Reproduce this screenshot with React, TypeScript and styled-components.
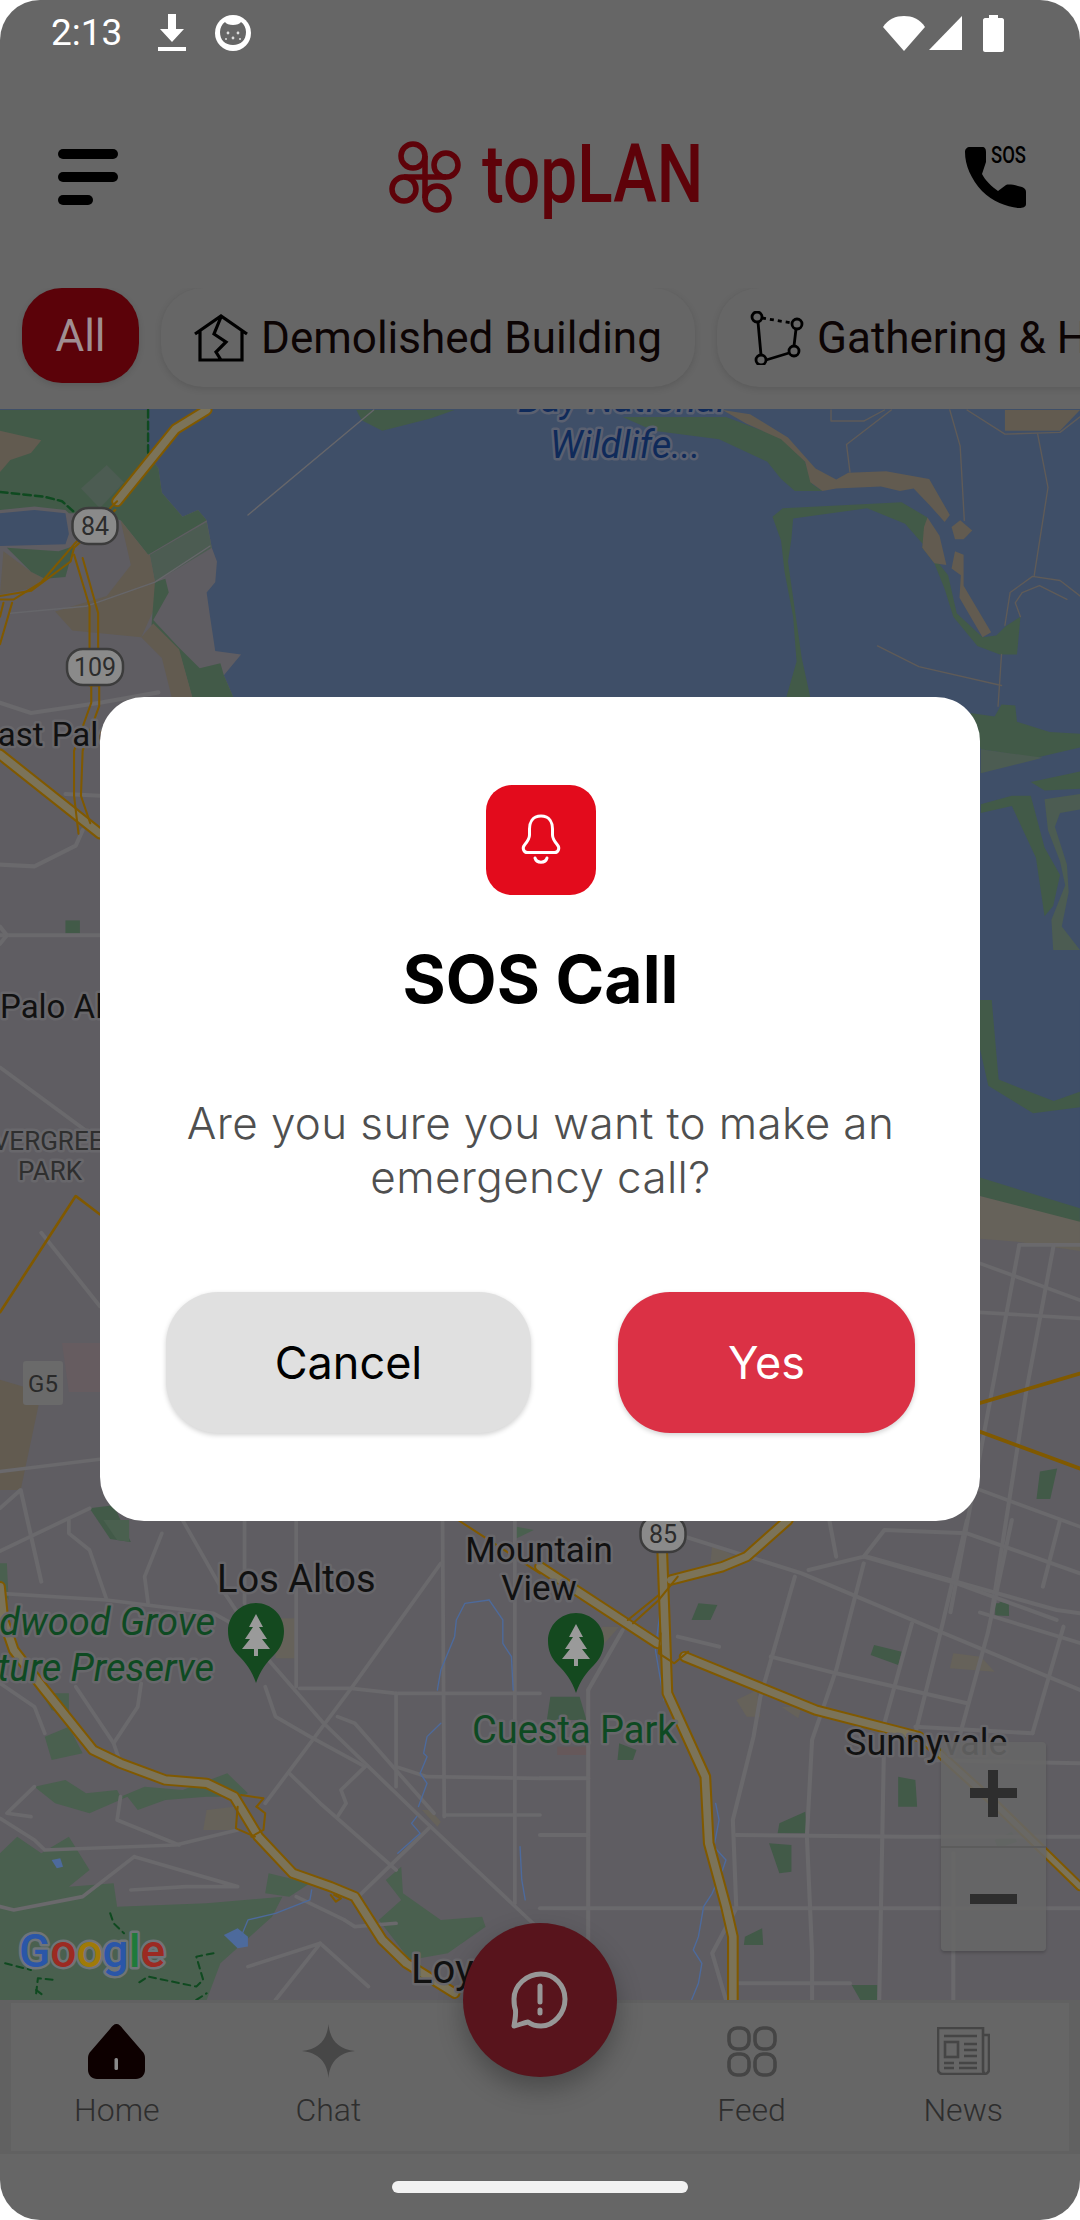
import React from "react";
import styled, { createGlobalStyle } from "styled-components";

const Global = createGlobalStyle`
  html, body { margin: 0; padding: 0; background: #fff; }
  * { box-sizing: border-box; }
`;

const Screen = styled.div`
  position: relative;
  width: 1080px;
  height: 2220px;
  border-radius: 40px;
  overflow: hidden;
  background: #666;
  display: flex;
  flex-direction: column;
  font-family: Roboto, "Liberation Sans", sans-serif;
`;

const StatusBar = styled.div`
  height: 66px;
  flex: none;
  display: flex;
  align-items: center;
  padding: 0 76px 0 51px;
  color: #fff;
`;
const Time = styled.span`
  font-size: 37px;
  line-height: 66px;
  width: 107px;
  flex: none;
`;
const StatusRight = styled.div`
  margin-left: auto;
  display: flex;
  align-items: center;
`;
const StatusIcon = styled.svg<{ $gap?: number }>`
  display: block;
  flex: none;
  margin-right: ${(p) => p.$gap ?? 0}px;
`;

const Header = styled.header`
  height: 222px;
  flex: none;
  display: flex;
  align-items: center;
  justify-content: space-between;
  padding: 0 54px 0 58px;
`;
const MenuButton = styled.div`
  display: flex;
  flex-direction: column;
  gap: 13px;
  width: 60px;
`;
const MenuBar = styled.span<{ $w: number }>`
  display: block;
  height: 10px;
  width: ${(p) => p.$w}px;
  border-radius: 5px;
  background: #000;
`;
const Logo = styled.div`
  display: flex;
  align-items: center;
  gap: 21px;
  margin-left: 4px;
`;
const LogoText = styled.span`
  display: block;
  width: 216px;
  font-size: 82px;
  line-height: 84px;
  font-weight: 500;
  color: #5e0209;
  white-space: nowrap;
  transform: scaleX(0.8);
  transform-origin: left center;
  margin-top: -6px;
`;
const PhoneBox = styled.div`
  position: relative;
  width: 61px;
  height: 61px;
`;
const SosBadge = styled.span`
  position: absolute;
  left: 26px;
  top: -3px;
  font-size: 23px;
  line-height: 24px;
  font-weight: 500;
  color: #000;
  transform: scaleX(0.8);
  transform-origin: left center;
`;

const ChipRow = styled.div`
  height: 121px;
  flex: none;
  display: flex;
  align-items: flex-start;
  gap: 22px;
  padding-left: 22px;
  overflow: hidden;
`;
const ActiveChip = styled.div`
  flex: none;
  width: 117px;
  height: 95px;
  border-radius: 40px;
  background: #5b0209;
  box-shadow: 0 2px 6px rgba(0, 0, 0, 0.12);
  color: #a08e92;
  font-size: 44px;
  display: flex;
  align-items: center;
  justify-content: center;
`;
const Chip = styled.div<{ $w: number }>`
  flex: none;
  width: ${(p) => p.$w}px;
  height: 99px;
  border-radius: 42px;
  background: #666;
  box-shadow: 0 2px 7px rgba(0, 0, 0, 0.12);
  color: #0c0404;
  font-size: 44px;
  display: flex;
  align-items: center;
  gap: 13px;
  padding-left: 33px;
  white-space: nowrap;
`;

const MapArea = styled.div`
  position: relative;
  flex: none;
  height: 1591px;
  overflow: hidden;
  background: #5f5d62;
`;
const MapSvg = styled.svg`
  display: block;
`;
const Label = styled.text<{ $s: number; $c?: string; $i?: boolean; $w?: number; $halo?: string }>`
  font-family: Roboto, "Liberation Sans", sans-serif;
  font-size: ${(p) => p.$s}px;
  font-style: ${(p) => (p.$i ? "italic" : "normal")};
  font-weight: ${(p) => p.$w ?? 400};
  fill: ${(p) => p.$c ?? "#111"};
  stroke: ${(p) => p.$halo ?? "#68676b"};
  stroke-width: 5px;
  paint-order: stroke;
  stroke-linejoin: round;
`;

const ZoomBox = styled.div`
  position: absolute;
  left: 941px;
  top: 1333px;
  width: 105px;
  height: 209px;
  border-radius: 4px;
  background: rgba(102, 102, 102, 0.88);
  box-shadow: 0 2px 3px rgba(0, 0, 0, 0.18);
  display: flex;
  flex-direction: column;
`;
const ZoomCell = styled.div`
  flex: 1;
  display: flex;
  align-items: center;
  justify-content: center;
  & + & {
    border-top: 2px solid #5c5c5c;
  }
`;

const NavBar = styled.nav`
  position: relative;
  height: 154px;
  flex: none;
  padding: 3px 11px;
  background: #616161;
`;
const NavInner = styled.div`
  height: 100%;
  background: #666;
  display: grid;
  grid-template-columns: repeat(5, 1fr);
`;
const NavItem = styled.div`
  position: relative;
  display: flex;
  flex-direction: column;
  align-items: center;
  padding-top: 20px;
`;
const NavIconBox = styled.div`
  height: 56px;
  display: flex;
  align-items: center;
  justify-content: center;
`;
const NavLabel = styled.span`
  margin-top: 12px;
  font-size: 32px;
  line-height: 38px;
  font-weight: 300;
  color: #2e2e2e;
`;
const Fab = styled.div`
  position: absolute;
  left: 50%;
  top: -80px;
  width: 154px;
  height: 154px;
  margin-left: -77px;
  border-radius: 50%;
  background: #58141c;
  box-shadow: 0 12px 26px rgba(0, 0, 0, 0.28);
  display: flex;
  align-items: center;
  justify-content: center;
`;

const Footer = styled.div`
  flex: 1;
  display: flex;
  justify-content: center;
  padding-top: 27px;
`;
const HomePill = styled.div`
  width: 296px;
  height: 12px;
  border-radius: 6px;
  background: #f2f2f2;
`;

const DialogLayer = styled.div`
  position: absolute;
  inset: 0;
  display: flex;
  align-items: center;
  justify-content: center;
`;
const Dialog = styled.div`
  width: 880px;
  height: 824px;
  margin-top: -2px;
  border-radius: 44px;
  background: #fff;
  padding: 88px 65px 0 66px;
  display: flex;
  flex-direction: column;
  align-items: center;
  font-family: Inter, "Liberation Sans", sans-serif;
`;
const BellTile = styled.div`
  width: 110px;
  height: 110px;
  border-radius: 26px;
  background: #e30b1c;
  display: flex;
  align-items: center;
  justify-content: center;
  flex: none;
`;
const Title = styled.h2`
  margin: 45px 0 0;
  font-size: 66px;
  line-height: 78px;
  font-weight: 700;
  color: #000;
`;
const Message = styled.p`
  margin: 78px 0 0;
  width: 740px;
  font-size: 44px;
  line-height: 54px;
  font-weight: 300;
  letter-spacing: 0.37px;
  color: #4f4f4f;
  text-align: center;
`;
const Actions = styled.div`
  margin-top: 88px;
  width: 100%;
  display: flex;
  justify-content: space-between;
`;
const ActionButton = styled.div<{ $w: number; $bg: string; $c: string }>`
  width: ${(p) => p.$w}px;
  height: 141px;
  border-radius: 52px;
  background: ${(p) => p.$bg};
  color: ${(p) => p.$c};
  box-shadow: 0 2px 5px rgba(0, 0, 0, 0.18);
  font-size: 45px;
  font-weight: 400;
  display: flex;
  align-items: center;
  justify-content: center;
`;

/* ---------- map data: each group is traced in its own crop's coordinates ---------- */
const C = {
  land: "#5f5d62",
  water: "#3f4f68",
  green: "#425a48",
  mgreen: "#4a604f",
  lgreen: "#4c5c52",
  tan: "#625b50",
  sand: "#66625a",
  road: "#6a696c",
  edge: "#805900",
  core: "#7b7359",
  blue: "#4d6a9c",
  trail: "#0f4a20",
};

type Poly = [string, string];

const Z9_POLYS: Poly[] = [
  ["0,0 430,0 430,130 460,170 470,240 530,310 575,290 600,320 615,400 630,440 625,500 600,530 610,600 625,700 700,710 650,770 680,840 1568,840 1568,1568 0,1568", C.land],
  ["0,0 430,0 430,130 460,170 470,240 530,310 575,290 600,320 430,420 350,320 280,300 200,300 190,290 100,280 0,290", C.green],
  ["0,60 120,88 90,125 30,145 0,180", C.tan],
  ["310,160 360,210 290,285 235,228", C.lgreen],
  ["435,420 600,325 615,400 450,500", C.lgreen],
  ["350,320 430,420 435,420 460,550 410,660 210,640 160,585 310,540 380,450", C.tan],
  ["10,410 90,470 130,490 80,520 0,535", C.tan],
  ["20,400 170,410 215,395 190,485 130,490 90,470", C.green],
  ["450,500 480,490 490,530 445,610 520,690 580,750 640,735 650,770 680,840 560,840 520,700 440,625", C.green],
  ["410,660 445,620 520,695 560,840 500,840 470,720", C.tan],
  ["0,300 100,290 190,300 200,360 190,390 0,395", C.water],
  ["1035,0 1320,0 1250,25 1110,60 1050,30", C.green],
  ["190,1482 232,1482 232,1520 190,1520", C.green],
];
const Z9_ROADS: string[] = [
  "0,850 90,880 290,850 460,820",
  "0,1320 100,1325 220,1265 240,1220",
  "190,1115 290,1120",
  "0,1525 290,1525",
  "0,1500 20,1525 0,1550",
];
const Z9_THIN: string[] = ["720,305 1085,0", "30,590 250,570 450,500 610,395"];
const Z9_HWY: string[] = ["600,0 510,55 340,265", "0,1000 290,1230"];
const Z9_GOLD: string[] = [
  "340,265 215,390 120,500 40,550 0,550",
  "335,290 215,400 205,440 90,525 0,540",
  "215,420 260,570 260,800 285,800 285,590 240,430",
  "35,560 0,680",
  "10,560 0,600",
  "265,800 265,850 215,990 215,1120 228,1230",
  "288,800 288,860 240,990 235,1120 262,1200",
];

const Z10_POLYS: Poly[] = [
  ["240,20 540,20 700,80 770,150 790,215 820,235 740,235 700,200 660,150 520,85 330,60", C.green],
  ["530,0 610,12 720,80 800,170 860,202 895,182 1005,178 1130,200 1190,305 1175,325 1130,275 1085,228 1045,235 990,222 860,228 820,235 785,210 770,150 700,85 600,40", C.tan],
  ["675,310 705,285 1050,268 1125,312 1110,400 1145,445 1175,520 1200,600 1270,685 1335,710 1385,710 1395,600 1352,628 1325,655 1285,660 1210,590 1185,480 1130,410 1060,330 950,285 735,315 730,375 720,440 760,720 785,835 715,835 745,730 735,600 710,470 700,380", C.green],
  ["1125,312 1160,365 1180,450 1145,445 1110,400 1115,340", C.tan],
  ["1220,320 1255,350 1230,375 1205,375 1195,340", C.tan],
  ["1205,410 1230,420 1230,510 1310,645 1285,660 1218,545 1222,480 1195,460", C.tan],
  ["1350,0 1568,0 1510,60 1350,60", C.tan],
  ["1250,880 1320,890 1340,855 1380,858 1385,905 1480,935 1568,940 1568,980 1440,1010 1280,985", C.green],
  ["1280,985 1460,1010 1280,1055", C.lgreen],
  ["1425,1080 1568,1050 1568,1100 1465,1105", C.green],
  ["1280,1145 1370,1120 1425,1120 1465,1270 1510,1350 1490,1440 1465,1470 1440,1300 1370,1150 1280,1170", C.green],
  ["1465,1130 1568,1115 1568,1160 1510,1170 1495,1210 1530,1320 1535,1400 1515,1500 1568,1568 1490,1568 1485,1480 1525,1380 1510,1310 1475,1220", C.lgreen],
];
const Z10_LINES: string[] = [
  "890,100 1020,0",
  "890,100 900,180",
  "845,0 845,32 940,32 1000,0",
  "1190,0 1220,105 1232,320",
  "1445,70 1475,225 1435,480",
  "1240,0 1350,70 1510,65 1568,20",
  "1350,625 1365,530 1430,483 1510,495 1568,540",
  "1395,600 1380,560 1400,530 1450,510 1530,550",
  "980,685 1100,745 1340,800",
  "1340,710 1330,860",
];

const Z5_POLYS: Poly[] = [
  ["1423,0 1568,0 1568,360 1500,340 1423,310", C.water],
  ["1423,320 1568,360 1568,410 1480,395 1423,390", C.sand],
  ["130,830 165,825 190,885 160,880", C.green],
  ["1423,0 1440,0 1450,130 1530,165 1568,150 1568,175 1500,185 1435,140 1423,80", C.green],
  ["1423,290 1568,340 1568,362 1423,320", C.green],
  ["1510,770 1535,765 1525,815 1505,815", C.green],
  ["1445,985 1465,985 1465,1005 1445,1005", C.green],
  ["0,620 60,640 30,800 0,800", C.tan],
  ["90,560 150,560 150,640 100,640", "#665c60"],
];
const Z5_ROADS: string[] = [
  "0,110 145,230",
  "0,770 145,750",
  "0,830 30,800 60,950",
  "130,830 0,900",
  "1480,400 1568,400",
  "1480,400 1440,640 1380,1000",
  "1423,430 1568,490",
  "1423,800 1568,860",
  "1530,400 1490,640 1440,1000",
  "1568,520 1423,510",
  "1423,1000 1568,1050",
  "145,500 60,380",
];
const Z5_HWY: string[] = ["0,510 110,320 145,350"];
const Z5_GOLD: string[] = ["1423,658 1568,610", "1423,705 1568,765"];

const Z11_POLYS: Poly[] = [
  ["100,800 190,780 250,820 340,810 350,830 420,800 530,810 660,760 720,820 700,830 600,830 480,840 400,870 370,830 260,880 160,850", C.mgreen],
  ["0,1000 50,950 120,1000 200,950 260,1050 200,1100 330,1090 340,1160 600,1150 820,1130 790,1190 640,1330 600,1440 0,1440", C.mgreen],
  ["130,650 200,620 240,700 150,720", C.mgreen],
  ["120,520 200,520 200,590 150,570", C.mgreen],
  ["300,0 375,0 375,65 340,60", C.mgreen],
  ["780,1060 900,1090 840,1130 770,1120", C.mgreen],
  ["1120,1080 1165,1040 1170,1120 1280,1200 1400,1190 1410,1220 1300,1300 1190,1320 1100,1200 1165,1140", C.mgreen],
  ["1500,20 1550,30 1490,60", C.mgreen],
  ["0,130 20,130 25,240 0,200", C.mgreen],
  ["600,870 680,860 690,930 590,930", C.sand],
  ["800,295 860,295 860,415 800,415", "#66625a"],
  ["650,1245 690,1225 720,1250 720,1280 690,1285", "#4d6a9c"],
  ["150,1020 175,1015 183,1040 165,1045", "#4d6a9c"],
  ["1225,870 1250,870 1280,905 1270,920", C.sand],
];
const Z11_ROADS: string[] = [
  "530,0 640,200 780,420 940,610 1230,900 1568,1230",
  "860,0 860,500",
  "710,0 710,250",
  "1285,0 1290,890",
  "870,505 1020,505 1150,520 1568,520",
  "1280,130 1020,505 770,850",
  "1150,520 1150,800",
  "1150,740 1240,770 1568,775",
  "1290,885 1568,885",
  "770,500 800,590 900,650 1060,740",
  "980,590 1030,610 1260,880",
  "840,760 930,850 1150,1050",
  "1060,740 990,810 1005,850 980,890",
  "1250,920 1040,1130",
  "1495,0 1495,1150",
  "200,0 200,40 260,90 310,240 620,280 690,320",
  "430,250 420,170 470,40",
  "310,240 0,220",
  "220,500 330,670 350,730",
  "410,490 400,560 330,670",
  "0,490 100,560 130,640",
  "350,830 340,900 520,975",
  "0,895 100,960 130,990 510,975 690,930",
  "0,1160 40,1170 240,1130 390,1010",
  "390,1010 690,1100 540,1100 380,1110",
  "100,800 20,880 90,890",
  "930,1270 1070,1400",
  "720,1340 930,1270 800,1440",
  "860,1130 1000,1200",
  "1000,1200 1030,1220 1150,1210",
];
const Z11_STREAMS: string[] = [
  "905,1110 900,1140 800,1180 720,1200 700,1250",
  "1420,240 1350,250 1325,300 1320,350 1280,450 1270,510",
  "1420,240 1460,300 1460,370 1485,410 1490,510",
  "1280,610 1240,650 1230,700 1240,710 1220,760 1240,790 1215,860",
  "1210,890 1195,910 1220,940 1155,1000",
  "1510,980 1515,1080 1525,1140",
];
const Z11_TRAILS: string[] = [
  "320,1180 330,1210 360,1240",
  "620,1300 570,1310 590,1380 570,1400 430,1370 400,1390",
  "15,1330 90,1350",
  "105,1420 110,1375 160,1380",
  "105,1410 130,1430",
  "570,1440 600,1420",
];
const Z11_HWY = "0,200 10,300 40,390 130,510 270,690 350,730 480,780 600,790 680,830 750,950 850,1060 960,1100 1030,1130 1110,1260 1180,1330 1320,1420";
const Z11_GOLD: string[] = [
  "700,825 765,835 745,860",
  "690,860 685,925 740,950",
  "745,860 770,880 765,930 730,950",
  "1330,0 1568,160",
  "960,1125 975,1145 990,1135 970,1125",
];

const Z12_POLYS: Poly[] = [
  ["970,375 1050,395 1040,435 960,405", C.green],
  ["460,250 515,255 495,300 440,300", C.green],
  ["1335,245 1355,250 1362,288 1325,285", C.green],
  ["30,530 115,530 135,600 20,600", C.green],
  ["1040,770 1090,780 1095,860 1040,860", C.green],
  ["695,910 770,875 775,940 690,940", C.green],
  ["665,970 730,975 730,1055 695,1060", C.green],
  ["595,1250 645,1225 648,1275 592,1275", C.green],
  ["905,1395 980,1395 980,1440 930,1440", C.green],
  ["230,670 280,690 270,720 225,720", C.green],
  ["1200,400 1280,410 1320,455 1190,445", C.sand],
  ["570,540 630,510 640,590 600,590", C.sand],
  ["700,560 760,560 750,595", C.sand],
  ["500,75 570,110 530,135 495,130", C.sand],
  ["180,320 230,320 170,390", C.sand],
  ["50,680 135,680 135,705 50,705", "#66585a"],
  ["1320,960 1370,935 1385,965 1330,985", C.green],
];
const Z12_ROADS: string[] = [
  "140,510 240,330",
  "140,510 140,1440",
  "0,1165 1568,1165",
  "420,50 760,160 1150,330 1568,510",
  "740,170 640,530 620,650 560,900 570,1165 500,1300 540,1440",
  "940,130 860,450 790,660 775,950 790,1300 790,1440",
  "1240,0 1160,350 1090,640",
  "1080,310 1000,610 985,1440",
  "1370,0 1300,340 1210,680",
  "670,410 860,460 1240,550",
  "950,110 1500,270 1568,280",
  "780,150 940,110 1210,190 1500,300",
  "570,945 1060,950 1568,950",
  "0,775 140,775",
  "0,945 140,945",
  "575,1390 900,1390",
  "1090,620 1430,640",
  "1430,640 1520,320",
  "1510,0 1460,200",
  "1200,1000 1200,1440",
  "1120,720 1568,730",
  "400,350 520,380",
  "840,0 860,110",
  "940,110 1000,30 1240,40 1568,160",
];
const Z12_STREAMS: string[] = [
  "350,260 335,390 360,540",
  "510,850 520,900 505,980 540,1020 530,1050 500,1120 475,1160 460,1250 445,1290 470,1330 460,1390 440,1440",
];
const Z12_HWY: string[] = [
  "355,95 370,520 480,770 490,970 540,1160 560,1250 560,1440",
  "380,180 530,140 600,110 720,0",
  "0,140 340,370",
  "420,410 800,570 1100,650",
];
const Z12_GOLD: string[] = ["255,300 345,225", "270,310 345,240 400,170", "350,340 345,400 390,430 430,395"];
const Z12_HWY2: string[] = ["1100,650 1160,700 1320,850 1568,1100"];

const Polys: React.FC<{ items: Poly[] }> = ({ items }) => (
  <>
    {items.map(([points, fill], i) => (
      <polygon key={i} points={points} fill={fill} />
    ))}
  </>
);
const Lines: React.FC<{ items: string[]; color: string; width: number; dash?: string }> = ({ items, color, width, dash }) => (
  <>
    {items.map((points, i) => (
      <polyline
        key={i}
        points={points}
        fill="none"
        stroke={color}
        strokeWidth={width}
        strokeLinejoin="round"
        strokeLinecap="round"
        strokeDasharray={dash}
      />
    ))}
  </>
);
const Highways: React.FC<{ items: string[]; w?: number }> = ({ items, w = 34 }) => (
  <>
    <Lines items={items} color={C.edge} width={w} />
    <Lines items={items} color={C.core} width={w - 12} />
  </>
);

const Shield: React.FC<{ cx: number; cy: number; w: number; text: string }> = ({ cx, cy, w, text }) => (
  <g>
    <rect x={cx - w / 2} y={cy - 18} width={w} height={36} rx={16} fill="#8a8a8a" stroke="#3c3c3c" strokeWidth={2.5} />
    <Label x={cx} y={cy + 9} textAnchor="middle" $s={25} $c="#2c2c2c" $halo="none">
      {text}
    </Label>
  </g>
);

const Pin: React.FC<{ x: number; y: number }> = ({ x, y }) => (
  <g transform={`translate(${x} ${y})`}>
    <path d="M0 80C-4 68-10 60-18 52-25 45-28 37-28 28-28 12-15 0 0 0S28 12 28 28C28 37 25 45 18 52 10 60 4 68 0 80Z" fill="#14491f" />
    <path d="M0 11 7 24H3L11 36H6L14 46H2V53H-2V46H-14L-6 36H-11L-3 24H-7Z" fill="#9a9a9a" />
  </g>
);

const CityMap: React.FC = () => (
  <MapSvg width={1080} height={1591} viewBox="0 409 1080 1591">
    <rect x={0} y={409} width={1080} height={1591} fill={C.land} />
    <rect x={0} y={409} width={1080} height={541} fill={C.water} />
    <polygon points="980,950 1080,950 1080,1220 1034,1190 980,1190" fill={C.water} />
    <g transform="translate(0 410) scale(.3444)">
      <Polys items={Z9_POLYS} />
      <Lines items={Z9_ROADS} color={C.road} width={12} />
      <Lines items={Z9_THIN} color="#66666a" width={4} />
      <Lines items={["430,0 430,130", "0,238 130,252 180,265 225,305"]} color={C.trail} width={7} dash="22 12" />
    </g>
    <g transform="translate(540 410) scale(.3444)">
      <Polys items={Z10_POLYS} />
      <Lines items={Z10_LINES} color="#5f5b58" width={4} />
    </g>
    <g transform="translate(0 1000) scale(.6887 .6124)">
      <Polys items={Z5_POLYS} />
      <Lines items={Z5_ROADS} color={C.road} width={6} />
    </g>
    <g transform="translate(0 1520) scale(.3444 .3333)">
      <Polys items={Z11_POLYS} />
      <Lines items={Z11_ROADS} color={C.road} width={11} />
      <Lines items={Z11_STREAMS} color={C.blue} width={4} />
      <Lines items={Z11_TRAILS} color={C.trail} width={6} dash="20 14" />
    </g>
    <g transform="translate(540 1520) scale(.3444 .3333)">
      <Polys items={Z12_POLYS} />
      <Lines items={Z12_ROADS} color={C.road} width={12} />
      <Lines items={Z12_STREAMS} color={C.blue} width={4} />
    </g>
    <g transform="translate(0 410) scale(.3444)">
      <Highways items={Z9_HWY} />
      <Lines items={Z9_GOLD} color={C.edge} width={6} />
    </g>
    <g transform="translate(0 1000) scale(.6887 .6124)">
      <Lines items={Z5_HWY} color={C.edge} width={4} />
      <Lines items={Z5_GOLD} color={C.edge} width={6} />
    </g>
    <g transform="translate(0 1520) scale(.3444 .3333)">
      <Highways items={[Z11_HWY]} />
      <Lines items={Z11_GOLD} color={C.edge} width={6} />
    </g>
    <g transform="translate(540 1520) scale(.3444 .3333)">
      <Highways items={Z12_HWY} />
      <Lines items={Z12_GOLD} color={C.edge} width={6} />
      <Highways items={Z12_HWY2} w={28} />
    </g>

    <Shield cx={95} cy={526} w={45} text="84" />
    <Shield cx={95} cy={667} w={56} text="109" />
    <Shield cx={663} cy={1534} w={45} text="85" />
    <rect x={23} y={1361} width={40} height={44} rx={3} fill="#6a6a6a" />
    <Label x={43} y={1392} textAnchor="middle" $s={24} $c="#2a2a2a" $halo="none">
      G5
    </Label>

    <Label x={518} y={412} $s={38} $i $c="#0f2a5a" $halo="#5a6070">
      Bay National
    </Label>
    <Label x={550} y={458} $s={38} $i $c="#0f2a5a" $halo="#5a6070">
      Wildlife...
    </Label>
    <Label x={-21} y={746} $s={33}>
      East Palo Alto
    </Label>
    <Label x={0} y={1018} $s={33}>
      Palo Alto
    </Label>
    <Label x={50} y={1150} textAnchor="middle" $s={26} $c="#2f2f2f">
      EVERGREEN
    </Label>
    <Label x={50} y={1180} textAnchor="middle" $s={26} $c="#2f2f2f">
      PARK
    </Label>
    <Label x={217} y={1592} $s={38}>
      Los Altos
    </Label>
    <Label x={539} y={1562} textAnchor="middle" $s={35}>
      Mountain
    </Label>
    <Label x={539} y={1600} textAnchor="middle" $s={35}>
      View
    </Label>
    <Label x={215} y={1635} textAnchor="end" $s={38} $i $c="#0e4a22">
      Redwood Grove
    </Label>
    <Label x={214} y={1681} textAnchor="end" $s={38} $i $c="#0e4a22">
      Nature Preserve
    </Label>
    <Label x={472} y={1743} $s={38} $c="#0e4a22">
      Cuesta Park
    </Label>
    <Label x={845} y={1755} $s={36}>
      Sunnyvale
    </Label>
    <Label x={411} y={1983} $s={40}>
      Loyola
    </Label>
    <Pin x={256} y={1603} />
    <Pin x={576} y={1613} />
    <Label x={19} y={1967} $s={46} $w={500} $c="#2a56a8" $halo="#6f7478">
      G<tspan fill="#9c2a22">o</tspan>
      <tspan fill="#a07a08">o</tspan>
      <tspan fill="#2a56a8">g</tspan>
      <tspan fill="#1f7a3a">l</tspan>
      <tspan fill="#9c2a22">e</tspan>
    </Label>
  </MapSvg>
);

const App: React.FC = () => (
  <Screen>
    <Global />
    <StatusBar>
      <Time>2:13</Time>
      <StatusIcon $gap={29} width={28} height={38} viewBox="0 0 28 38">
        <path d="M10 0H18V15H26L14 28 2 15H10Z" fill="#fff" />
        <rect x={0} y={33} width={28} height={4} fill="#fff" />
      </StatusIcon>
      <StatusIcon width={36} height={36} viewBox="0 0 36 36">
        <circle cx={18} cy={18} r={18} fill="#fff" />
        <path d="M5 17C5 13 7 9 10 7 12 11 24 11 26 7 29 9 31 13 31 17 31 25 26 30 18 30 10 30 5 25 5 17Z" fill="#666" />
        <circle cx={13} cy={18} r={1.4} fill="#ddd" />
        <circle cx={23} cy={18} r={1.4} fill="#ddd" />
        <circle cx={18} cy={23} r={1.4} fill="#ddd" />
        <circle cx={11} cy={24} r={1} fill="#ddd" />
        <circle cx={25} cy={24} r={1} fill="#ddd" />
      </StatusIcon>
      <StatusRight>
        <StatusIcon $gap={4} width={42} height={36} viewBox="0 0 42 36">
          <path d="M0 12C5 4 13 1 21 1S37 4 42 12L21 36Z" fill="#fff" />
        </StatusIcon>
        <StatusIcon $gap={21} width={33} height={34} viewBox="0 0 33 34">
          <path d="M33 0V34H0Z" fill="#fff" />
        </StatusIcon>
        <StatusIcon width={21} height={37} viewBox="0 0 21 37">
          <path d="M6 0H15V3H19C20 3 21 4 21 5V35C21 36 20 37 19 37H2C1 37 0 36 0 35V5C0 4 1 3 2 3H6Z" fill="#fff" />
        </StatusIcon>
      </StatusRight>
    </StatusBar>

    <Header>
      <MenuButton>
        <MenuBar $w={60} />
        <MenuBar $w={60} />
        <MenuBar $w={35} />
      </MenuButton>
      <Logo>
        <svg width={72} height={72} viewBox="0 0 72 72" fill="none" stroke="#5e0209" strokeWidth={5.5}>
          <circle cx={24} cy={15} r={12} />
          <circle cx={57} cy={24} r={12} />
          <circle cx={15} cy={48} r={12} />
          <circle cx={48} cy={57} r={12} />
          <path d="M36 15V57M15 36H57" />
        </svg>
        <LogoText>topLAN</LogoText>
      </Logo>
      <PhoneBox>
        <svg width={61} height={61} viewBox="0 0 61 61">
          <path d="M0 5C0 2 2 0 5 0H17C20 0 21 2 21 5V15L17 27C20 33 27 40 33 44L41 38C44 37 50 38 57 40 60 41 61 43 61 45V57C61 60 58 61 54 61 42 60 28 55 17 44 6 32 0 18 0 5Z" fill="#000" />
        </svg>
        <SosBadge>SOS</SosBadge>
      </PhoneBox>
    </Header>

    <ChipRow>
      <ActiveChip>All</ActiveChip>
      <Chip $w={534}>
        <svg width={54} height={48} viewBox="0 0 54 48" fill="none" stroke="#000" strokeWidth={3.2} style={{ flex: "none" }}>
          <path d="M1 20 27 2 53 20M6 17V46H48V17M27 3 20 20 32 28 22 38 27 46" />
        </svg>
        Demolished Building
      </Chip>
      <Chip $w={600}>
        <svg width={54} height={54} viewBox="0 0 54 54" fill="none" stroke="#000" strokeWidth={2.8} style={{ flex: "none" }}>
          <path d="M8 11 11 44M16 49 39 42M44 35 46 18" />
          <path d="M12 7 42 12" strokeDasharray="4 4" />
          <circle cx={7} cy={6} r={5} />
          <circle cx={47} cy={13} r={5} />
          <circle cx={44} cy={40} r={5} />
          <circle cx={11} cy={49} r={5} />
        </svg>
        Gathering &amp; Help Center
      </Chip>
    </ChipRow>

    <MapArea>
      <CityMap />
      <ZoomBox>
        <ZoomCell>
          <svg width={47} height={47} viewBox="0 0 47 47">
            <path d="M18 0H28V18H47V28H28V47H18V28H0V18H18Z" fill="#2e2e2e" />
          </svg>
        </ZoomCell>
        <ZoomCell>
          <svg width={47} height={10} viewBox="0 0 47 10">
            <rect width={47} height={10} fill="#2e2e2e" />
          </svg>
        </ZoomCell>
      </ZoomBox>
    </MapArea>

    <NavBar>
      <NavInner>
        <NavItem>
          <NavIconBox>
            <svg width={57} height={55} viewBox="0 0 57 55">
              <path d="M28.5 0C31 0 33 2 35 5L54 27C56 29 57 31 57 34V46C57 51 53 55 48 55H9C4 55 0 51 0 46V34C0 31 1 29 3 27L22 5C24 2 26 0 28.5 0Z" fill="#0d0000" />
              <rect x={26.5} y={34} width={3.5} height={12} rx={1.5} fill="#8a8a8a" />
            </svg>
          </NavIconBox>
          <NavLabel>Home</NavLabel>
        </NavItem>
        <NavItem>
          <NavIconBox>
            <svg width={53} height={54} viewBox="0 0 53 54">
              <path d="M26.5 0C28 16 36 25 53 27 36 29 28 38 26.5 54 25 38 17 29 0 27 17 25 25 16 26.5 0Z" fill="#474747" />
            </svg>
          </NavIconBox>
          <NavLabel>Chat</NavLabel>
        </NavItem>
        <NavItem>
          <Fab>
            <svg width={58} height={58} viewBox="0 0 58 58" fill="none" stroke="#979797" strokeWidth={5}>
              <path d="M30 3C43 3 54 14 54 28S43 55 30 55C25 55 21 54 17 51 12 52 8 54 3 55 4 49 5 44 4.500 39 3 35 3 32 3 28 3 14 16 3 30 3Z" strokeLinejoin="round" />
              <path d="M29 15V31M29 39V42" strokeLinecap="round" />
            </svg>
          </Fab>
        </NavItem>
        <NavItem>
          <NavIconBox>
            <svg width={50} height={51} viewBox="0 0 50 51" fill="none" stroke="#454545" strokeWidth={3.6}>
              <rect x={2} y={2} width={20} height={21} rx={8} />
              <rect x={28} y={2} width={20} height={21} rx={8} />
              <rect x={2} y={28} width={20} height={21} rx={8} />
              <rect x={28} y={28} width={20} height={21} rx={8} />
            </svg>
          </NavIconBox>
          <NavLabel>Feed</NavLabel>
        </NavItem>
        <NavItem>
          <NavIconBox>
            <svg width={53} height={48} viewBox="0 0 53 48" fill="none" stroke="#454545" strokeWidth={2.6}>
              <path d="M46 8H52V42C52 45 50 47 47 47H6C3 47 1 45 1 42V1H46V42C46 45 47 47 48 47" />
              <path d="M7 9H40M7 36H17M22 36H40M7 41H17M22 41H40M27 17H40M27 23H40M27 29H40" />
              <rect x={8} y={15} width={13} height={15} />
            </svg>
          </NavIconBox>
          <NavLabel>News</NavLabel>
        </NavItem>
      </NavInner>
    </NavBar>

    <Footer>
      <HomePill />
    </Footer>

    <DialogLayer>
      <Dialog>
        <BellTile>
          <svg width={42} height={52} viewBox="0 0 42 52" fill="none" stroke="#fff" strokeWidth={3} strokeLinecap="round">
            <path d="M21 2C12 2 9.500 9 9.500 15V21C9.500 25 7.500 27.500 4.500 31 2 34 3.500 38.500 7.500 38.500H34.500C38.500 38.500 40 34 37.500 31 34.500 27.500 32.500 25 32.500 21V15C32.500 9 30 2 21 2Z" />
            <path d="M15 44C16.500 49.500 25.500 49.500 27 44" />
          </svg>
        </BellTile>
        <Title>SOS Call</Title>
        <Message>Are you sure you want to make an emergency call?</Message>
        <Actions>
          <ActionButton $w={365} $bg="#e0e0e0" $c="#000">
            Cancel
          </ActionButton>
          <ActionButton $w={297} $bg="#db3145" $c="#fff">
            Yes
          </ActionButton>
        </Actions>
      </Dialog>
    </DialogLayer>
  </Screen>
);

export default App;
